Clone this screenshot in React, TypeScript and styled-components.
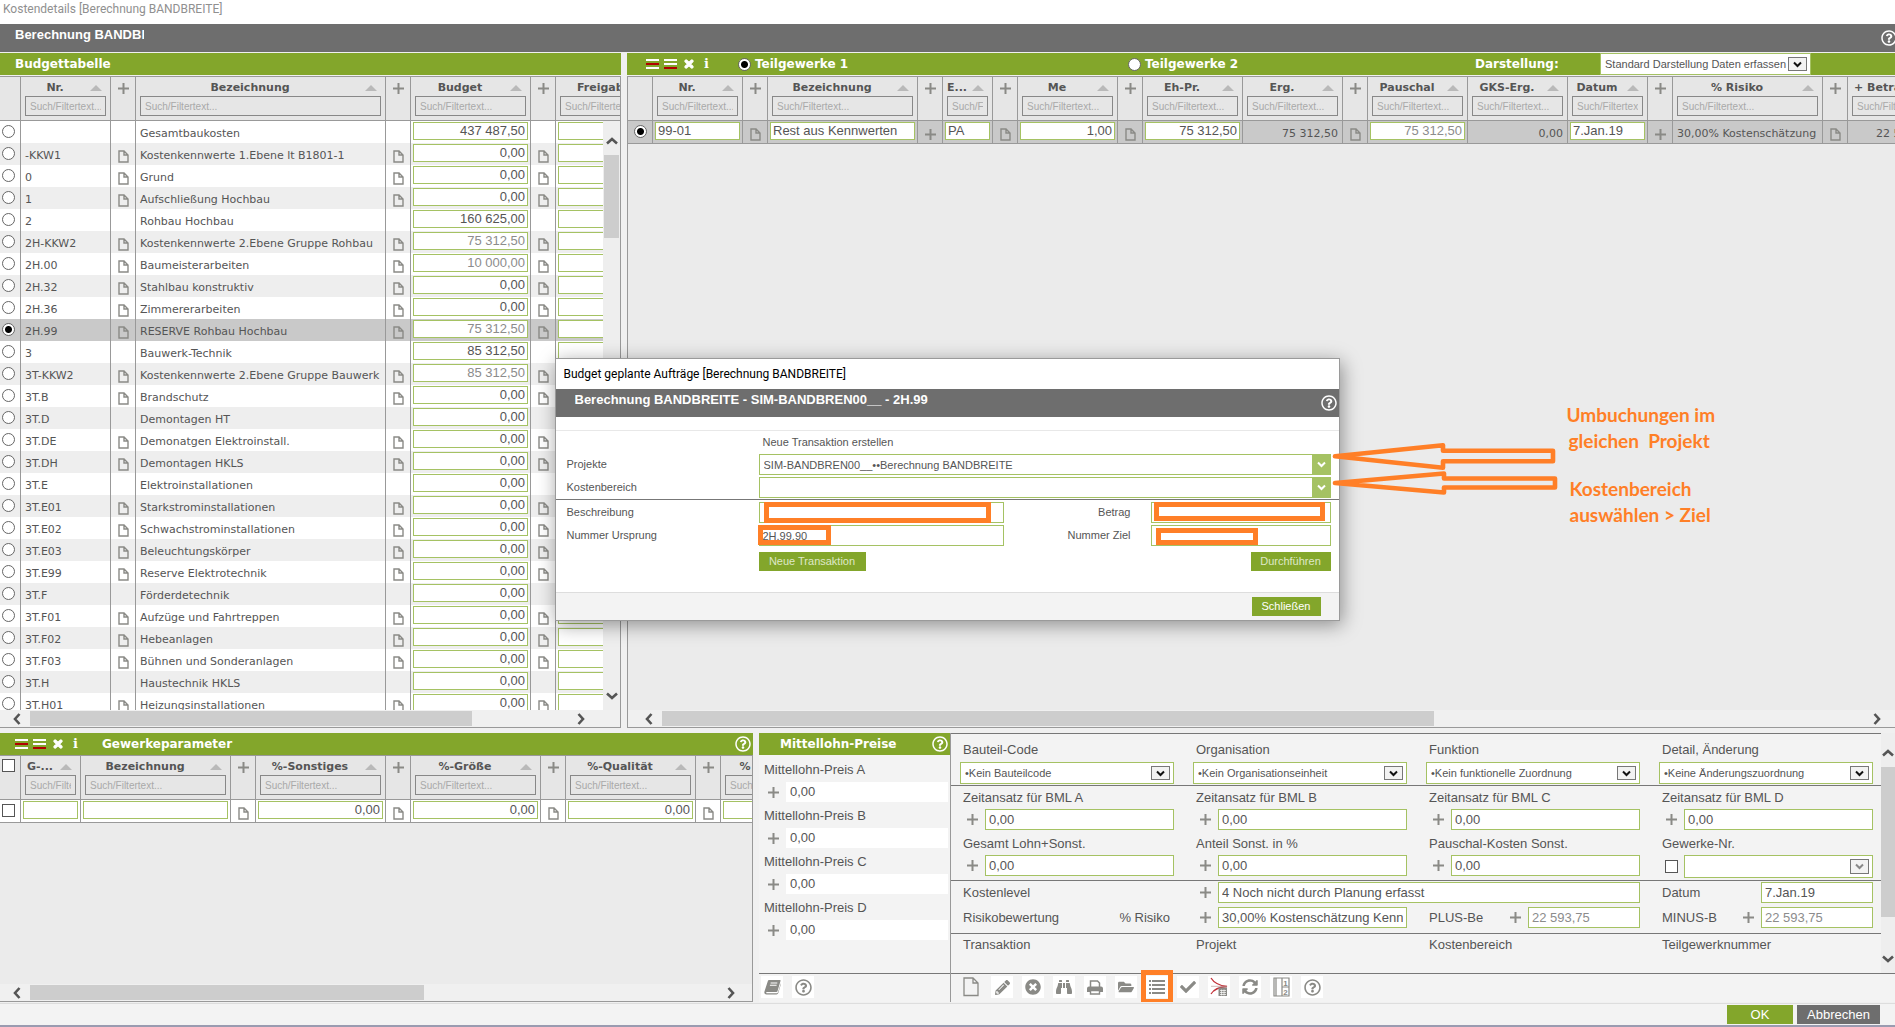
import React from 'react';
import styled, { createGlobalStyle, css } from 'styled-components';
import {
  FaBinoculars,
  FaCheck,
  FaFolderOpen,
  FaPencilAlt,
  FaRegQuestionCircle,
  FaSyncAlt,
  FaTimes,
  FaTimesCircle,
} from 'react-icons/fa';

const c = {
  green: '#83a62b',
  lime: '#a5c263',
  dark: '#6e6e6e',
  line: '#999999',
  rule: '#777777',
  head: '#e6e6e6',
  body: '#ebebeb',
  pane: '#f3f3f3',
  picked: '#c9c9c9',
  text: '#555555',
  muted: '#8c8c8c',
  icon: '#8a8a86',
  mark: '#ff7f27',
};
const sans = '"Liberation Sans", Arial, sans-serif';
const wide = '"DejaVu Sans", Verdana, sans-serif';
const caption = 'Roboto, "Segoe UI", sans-serif';

const Global = createGlobalStyle`
  *, *::before, *::after { box-sizing: border-box; }
  body { margin: 0; background: #f0f0f0; color: ${c.text}; font-family: ${sans}; font-size: 13px; }
  button, input, select { font: inherit; color: inherit; margin: 0; }
  button { border: 0; padding: 0; background: none; cursor: pointer; }
`;

const Page = styled.div`
  position: relative;
  display: flex;
  flex-direction: column;
  height: 100vh;
  min-height: 700px;
  overflow: hidden;
`;
const WindowTitle = styled.div`
  flex: none;
  height: 24px;
  padding: 0 3px;
  background: #fff;
  color: #909090;
  font: 12px/18px ${caption};
`;
const DarkBar = styled.header<{ $inset: number; $end?: number }>`
  flex: none;
  display: flex;
  justify-content: space-between;
  height: 28px;
  padding-left: ${(p) => p.$inset}px;
  padding-right: ${(p) => p.$end ?? 0}px;
  background: ${c.dark};
  color: #fff;
`;
const BarTitle = styled.h1<{ $clip?: boolean }>`
  margin: 0;
  padding-top: 2px;
  font: bold 13px/18px ${sans};
  white-space: nowrap;
  overflow: hidden;
  ${(p) => p.$clip && css`width: 129px;`}
`;
const HelpButton = styled.button<{ $out?: boolean }>`
  display: grid;
  place-items: center;
  flex: none;
  width: 16px;
  margin-right: ${(p) => (p.$out ? -2 : 0)}px;
  color: #fff;
  font-size: 16px;
`;
const TopSplit = styled.main`
  flex: 1;
  min-height: 0;
  display: grid;
  grid-template-columns: minmax(0, 621fr) minmax(0, 1268fr);
  gap: 6px;
  margin: 1px 0 5px;
`;
const Panel = styled.section`
  display: flex;
  flex-direction: column;
  min-width: 0;
  min-height: 0;
  overflow: hidden;
`;
const GreenBar = styled.header<{ $gap?: number; $inset: number }>`
  flex: none;
  display: flex;
  align-items: center;
  height: 22px;
  margin-bottom: ${(p) => p.$gap ?? 0}px;
  padding: 0 2px 0 ${(p) => p.$inset}px;
  background: ${c.green};
  color: #fff;
  font: bold 12px/22px ${wide};
  white-space: nowrap;
`;
const PanelTitle = styled.h2`
  margin: 0;
  font: inherit;
`;
const Grow = styled.span`
  flex: 1;
`;
const BarEnd = styled.span`
  flex: none;
  width: 82px;
`;
const BarLabel = styled.label`
  flex: none;
  width: 125px;
`;
const Tools = styled.div<{ $after: number }>`
  display: flex;
  align-items: center;
  gap: 5px;
  margin-right: ${(p) => p.$after}px;
`;
const ToolButton = styled.button`
  display: grid;
  place-items: center;
  width: 13px;
  height: 16px;
  color: #fff;
  font: bold 13px/16px "DejaVu Serif", serif;
`;
const RadioLabel = styled.label<{ $share: number }>`
  display: flex;
  align-items: center;
  gap: 4px;
  flex: ${(p) => p.$share} 1 0;
`;
const Radio = styled.input.attrs({ type: 'radio' })`
  appearance: none;
  flex: none;
  width: 13px;
  height: 13px;
  border: 1px solid #666;
  border-radius: 50%;
  background: #fff;
  &:checked { background: radial-gradient(circle, #000 0 3px, #fff 4px); }
`;
const Tick = styled.input.attrs({ type: 'checkbox' })`
  appearance: none;
  display: block;
  width: 13px;
  height: 13px;
  border: 1px solid #555;
  background: #fff;
`;

const Frame = styled.div<{ $bleed?: boolean; $open?: boolean }>`
  position: relative;
  flex: 1;
  min-height: 0;
  display: flex;
  flex-direction: column;
  border: 1px solid ${c.line};
  ${(p) => p.$open && css`border-right: 0;`}
  ${(p) => p.$bleed && css`margin-left: -5px;`}
  background: ${c.body};
`;
const Viewport = styled.div`
  position: relative;
  flex: 1;
  min-height: 0;
  overflow: hidden;
`;
const Table = styled.table<{ $width: number }>`
  width: ${(p) => p.$width}px;
  table-layout: fixed;
  border-collapse: separate;
  border-spacing: 0;
  border-bottom: 1px solid ${c.line};
  font: 11px/18px ${wide};
`;
const Th = styled.th`
  height: 44px;
  padding: 3px 4px 0;
  vertical-align: top;
  text-align: center;
  background: ${c.head};
  border-right: 1px solid ${c.line};
  border-bottom: 1px solid ${c.line};
`;
const HeadLine = styled.div`
  display: flex;
  align-items: center;
  height: 16px;
  padding-right: 4px;
  gap: 5px;
  font: bold 11px/16px ${wide};
  white-space: nowrap;
`;
const HeadLabel = styled.span`
  flex: 1;
`;
const SortMark = styled.span`
  border: 6px solid transparent;
  border-top: 0;
  border-bottom: 6px solid #b9b9b9;
`;
const Filter = styled.input`
  display: block;
  width: 100%;
  height: 20px;
  padding: 0 4px;
  border: 1px solid #888;
  background: ${c.head};
  font: 10px/18px ${sans};
  &::placeholder { color: #a9a9a9; opacity: 1; }
`;
const HeadIcon = styled.button`
  display: grid;
  place-items: center;
  width: 100%;
  height: 16px;
`;
const HeadTick = styled.div`
  display: grid;
  justify-content: center;
`;
const Tr = styled.tr<{ $picked: boolean }>`
  background: #fff;
  &:nth-child(even) { background: #eeeeee; }
  ${(p) => p.$picked && css`&&& { background: ${c.picked}; }`}
`;
const Td = styled.td<{ $kind: string; $right?: boolean }>`
  height: 22px;
  padding: ${(p) => (p.$kind === 'text' ? '4px 4px 0' : p.$kind === 'in' ? '1px 2px 0' : '4px 0 0')};
  vertical-align: top;
  text-align: ${(p) => (p.$right ? 'right' : 'left')};
  border-right: 1px solid ${c.line};
  white-space: nowrap;
  overflow: hidden;
`;
const CellInput = styled.input<{ $right?: boolean; $muted?: boolean }>`
  display: block;
  width: 100%;
  height: 18px;
  padding: 0 2px 2px;
  border: 1px solid ${c.lime};
  background: #fff;
  color: ${(p) => (p.$muted ? c.muted : c.text)};
  font: 13px/14px ${sans};
  text-align: ${(p) => (p.$right ? 'right' : 'left')};
`;
const CellIcon = styled.button`
  display: grid;
  place-items: center;
  width: 100%;
  height: 18px;
`;
const CellChoice = styled.div`
  display: grid;
  justify-content: center;
`;

const HBar = styled.div`
  flex: none;
  display: flex;
  align-items: center;
  height: 17px;
  background: #f0f0f0;
`;
const HArrow = styled.button<{ $w: number; $lead?: boolean }>`
  flex: none;
  display: grid;
  align-items: center;
  justify-content: ${(p) => (p.$lead ? 'end' : 'center')};
  width: ${(p) => p.$w}px;
  height: 17px;
  padding-right: ${(p) => (p.$lead ? 7 : 0)}px;
`;
const HTrack = styled.div`
  flex: 1;
`;
const HThumb = styled.div`
  height: 15px;
  background: #cdcdcd;
`;
const VBar = styled.div<{ $over?: boolean }>`
  display: flex;
  flex-direction: column;
  background: #eeeeee;
  ${(p) =>
    p.$over
      ? css`position: absolute; top: 44px; right: 0; bottom: 0; width: 17px; padding: 0 1px;`
      : css`flex: none; width: 14px;`}
`;
const VArrow = styled.button<{ $h: number }>`
  flex: none;
  display: grid;
  align-items: end;
  justify-content: center;
  width: 100%;
  height: ${(p) => p.$h}px;
  padding-bottom: 8px;
`;
const VTrack = styled.div`
  flex: 1;
`;
const VThumb = styled.div`
  background: #cdcdcd;
`;

const SelectWrap = styled.span<{ $h: number; $w?: number }>`
  position: relative;
  display: block;
  flex: ${(p) => (p.$w ? 'none' : '1')};
  width: ${(p) => (p.$w ? `${p.$w}px` : 'auto')};
  height: ${(p) => p.$h}px;
`;
const Select = styled.select`
  appearance: none;
  display: block;
  width: 100%;
  height: 100%;
  padding: 0 22px 0 4px;
  border: 1px solid ${c.lime};
  border-radius: 0;
  background: #fff;
  color: ${c.text};
  font: 11px/18px ${sans};
  opacity: 1;
`;
const SelectArrow = styled.span<{ $off?: boolean }>`
  position: absolute;
  top: 4px;
  right: 4px;
  bottom: 4px;
  display: grid;
  place-items: center;
  width: 19px;
  border: 1px solid #777;
  background: #f2f2f2;
  color: ${(p) => (p.$off ? '#888' : '#111')};
  pointer-events: none;
`;
const LimeArrow = styled.span`
  position: absolute;
  top: 0;
  right: 0;
  bottom: 0;
  display: grid;
  place-items: center;
  width: 19px;
  background: ${c.lime};
  color: #fff;
  pointer-events: none;
`;

const BottomSplit = styled.div`
  flex: none;
  display: grid;
  grid-template-columns: minmax(0, 759fr) minmax(0, 191fr) minmax(0, 945fr);
  margin-bottom: 1px;
`;
const ParamPanel = styled(Panel)`
  margin-right: 6px;
`;
const PricePanel = styled(Panel)`
  background: ${c.pane};
`;
const PriceList = styled.div`
  flex: 1;
  padding: 7px 2px 0 5px;
`;
const PriceItem = styled.div`
  margin-bottom: 6px;
`;
const Label = styled.label<{ $gap?: number }>`
  display: block;
  margin-bottom: ${(p) => p.$gap ?? 0}px;
  font: 13px/16px ${sans};
  white-space: nowrap;
`;
const PlusRow = styled.div<{ $gap?: number }>`
  display: flex;
  align-items: center;
  gap: ${(p) => p.$gap ?? 0}px;
`;
const PlusButton = styled.button<{ $w?: number }>`
  flex: none;
  display: grid;
  place-items: center;
  width: ${(p) => p.$w ?? 25}px;
  height: 18px;
`;
const PriceInput = styled.input`
  flex: 1;
  min-width: 0;
  height: 20px;
  padding: 0 4px;
  border: 0;
  background: #fff;
  font: 13px/20px ${sans};
`;
const FormPanel = styled(Panel)`
  background: ${c.pane};
  border-left: 1px solid ${c.line};
`;
const FormBody = styled.div`
  flex: 1;
  display: flex;
`;
const FormMain = styled.div`
  flex: 1;
  min-width: 0;
`;
const Section = styled.div<{ $top: number; $bottom: number; $rows: number }>`
  display: grid;
  grid-template-columns: repeat(4, minmax(0, 1fr));
  column-gap: 19px;
  row-gap: ${(p) => p.$rows}px;
  padding: ${(p) => p.$top}px 8px ${(p) => p.$bottom}px 9px;
  border-top: 1px solid ${c.rule};
`;
const Field = styled.div`
  min-width: 0;
`;
const LineField = styled.div<{ $span?: number }>`
  grid-column: span ${(p) => p.$span ?? 1};
  display: flex;
  align-items: center;
  justify-content: space-between;
  min-width: 0;
  padding-left: ${(p) => (p.$span ? 0 : 3)}px;
`;
const FieldLabel = styled(Label)`
  padding-left: 3px;
`;
const LineText = styled.span`
  padding-right: 4px;
`;
const FieldInput = styled.input<{ $w?: number; $muted?: boolean }>`
  flex: ${(p) => (p.$w ? 'none' : 1)};
  width: ${(p) => (p.$w ? `${p.$w}px` : 'auto')};
  min-width: 0;
  height: 21px;
  padding: 0 3px;
  border: 1px solid ${c.lime};
  background: #fff;
  color: ${(p) => (p.$muted ? c.muted : c.text)};
  font: 13px/19px ${sans};
`;
const TickSlot = styled.span`
  flex: none;
  display: grid;
  justify-content: center;
  width: 25px;
`;
const Toolbar = styled.div<{ $inset: number }>`
  flex: none;
  display: flex;
  gap: 9px;
  padding: 2px 0 4px ${(p) => p.$inset}px;
  border-top: 1px solid ${c.rule};
`;
const Tile = styled.button<{ $bare?: boolean }>`
  position: relative;
  display: grid;
  place-items: center;
  width: 22px;
  height: 22px;
  background: ${(p) => (p.$bare ? 'transparent' : '#fff')};
  color: ${c.icon};
  font-size: 15px;
`;
const Footer = styled.footer`
  flex: none;
  display: flex;
  justify-content: flex-end;
  gap: 4px;
  padding: 1px 15px 1px 0;
  border-top: 1px solid #dddddd;
  border-bottom: 2px solid #9a9bb0;
  background: ${c.pane};
`;
const Action = styled.button<{ $w: number; $tone?: string; $small?: boolean; $dim?: boolean }>`
  width: ${(p) => p.$w}px;
  height: 19px;
  background: ${(p) => p.$tone ?? c.green};
  color: ${(p) => (p.$dim ? '#dfe8c8' : '#fff')};
  font: ${(p) => (p.$small ? 11 : 13)}px/19px ${sans};
`;

const Overlay = styled.div`
  position: absolute;
  top: 358px;
  left: calc(50% - 393px);
  width: 785px;
`;
const Dialog = styled.div`
  border: 1px solid #9a9a9a;
  background: #fff;
  box-shadow: 2px 4px 18px rgba(0, 0, 0, 0.4);
  font: 11px/20px ${sans};
`;
const DialogTitle = styled.div`
  height: 30px;
  padding-left: 8px;
  color: #000;
  font: 12px/30px ${caption};
`;
const DialogStrip = styled.div`
  height: 14px;
  border-bottom: 1px solid #e8e8e8;
`;
const DialogForm = styled.form`
  height: 161px;
`;
const DialogRows = styled.div<{ $ruled?: boolean }>`
  display: grid;
  grid-template-columns: 192px minmax(0, 1fr);
  row-gap: 2px;
  padding: 1px 8px 1px 11px;
  ${(p) => p.$ruled && css`
    grid-template-columns: 192px 245px minmax(0, 1fr) 180px;
    padding-top: 2px;
    border-top: 1px solid ${c.rule};
  `}
`;
const DialogNote = styled.div`
  grid-column: 2;
  padding: 0 4px;
  line-height: 20px;
`;
const DialogLabel = styled.label<{ $right?: boolean }>`
  padding-right: ${(p) => (p.$right ? 20 : 0)}px;
  text-align: ${(p) => (p.$right ? 'right' : 'left')};
  line-height: 21px;
`;
const DialogInput = styled.input`
  display: block;
  width: 100%;
  height: 21px;
  padding: 0 3px;
  border: 1px solid ${c.lime};
  background: #fff;
  font: 11px/19px ${sans};
`;
const DialogActions = styled.div`
  display: flex;
  justify-content: space-between;
  padding: 5px 8px 0 203px;
`;
const DialogFooter = styled.div`
  display: flex;
  justify-content: flex-end;
  height: 28px;
  padding: 4px 18px 0;
  border-top: 1px solid #dddddd;
  background: #f3f3f3;
`;
const Highlight = styled.span<{ $x: number; $y: number; $w: number; $h: number }>`
  position: absolute;
  left: ${(p) => p.$x}px;
  top: ${(p) => p.$y}px;
  width: ${(p) => p.$w}px;
  height: ${(p) => p.$h}px;
  border: 5px solid ${c.mark};
  pointer-events: none;
`;
const Arrows = styled.svg`
  position: absolute;
  left: 774px;
  top: 80px;
  pointer-events: none;
`;
const Note = styled.p<{ $y: number; $x: number }>`
  position: absolute;
  left: ${(p) => p.$x}px;
  top: ${(p) => p.$y}px;
  margin: 0;
  color: ${c.mark};
  font: bold 19px/26px Lato, Calibri, sans-serif;
  white-space: pre;
`;

const Plus = () => (
  <svg width="11" height="11" viewBox="0 0 11 11" aria-hidden="true">
    <path d="M5.5 0v11M0 5.5h11" stroke={c.icon} strokeWidth="2" />
  </svg>
);
const Sheet = () => (
  <svg width="11" height="13" viewBox="0 0 11 13" aria-hidden="true">
    <path d="M1 1h5l4 4v7H1zM6 1v4h4" fill="none" stroke={c.icon} strokeWidth="1.4" />
  </svg>
);
const turn = { left: 0, up: 90, right: 180, down: 270 };
const Chevron = ({ dir }: { dir: keyof typeof turn }) => (
  <svg width="12" height="12" viewBox="0 0 12 12" aria-hidden="true">
    <path d="M8.5 1 4 6l4.500 5" transform={`rotate(${turn[dir]} 6 6)`} fill="none" stroke="#555" strokeWidth="2.600" />
  </svg>
);
const SmallV = () => (
  <svg width="9" height="7" viewBox="0 0 9 7" aria-hidden="true">
    <path d="M1 1.500 4.500 5 8 1.500" fill="none" stroke="currentColor" strokeWidth="2" />
  </svg>
);
const Lines = ({ red }: { red: number }) => (
  <svg width="13" height="10" viewBox="0 0 13 10" aria-hidden="true">
    {[0, 1, 2].map((i) => (
      <rect key={i} y={i * 4} width="13" height="2" fill={i === red ? '#b00000' : '#fff'} />
    ))}
  </svg>
);
const BigSheet = () => (
  <svg width="16" height="20" viewBox="0 0 16 20" aria-hidden="true">
    <path d="M1 1h9l5 5v12.500H1zM10 1v5h5" fill="none" stroke={c.icon} strokeWidth="1.300" />
  </svg>
);
const ListLines = () => (
  <svg width="16" height="14" viewBox="0 0 16 14" aria-hidden="true">
    {[0, 4, 8, 12].map((y) => (
      <path key={y} d={`M0 ${y}h2v2H0zM3 ${y}h13v2H3z`} fill={c.icon} />
    ))}
  </svg>
);
const Book = () => (
  <svg width="17" height="16" viewBox="0 0 17 16" aria-hidden="true">
    <path d="M5.500 1h10.300c.6 0 .9.500.7 1.100L13.500 12.200c-.2.500-.6.800-1.100.800H3c-.9 0-1.300.900-.4 1.300h9.900c.8 0 1.200-.3 1.500-1.100L16.900 4l-.1 1.500-2.500 8.600c-.3.900-.9 1.400-1.800 1.400H2.600C1 15.500 0 14 .4 12.700L3.700 2.400C4 1.500 4.600 1 5.500 1z" fill={c.icon} />
    <path d="M6.600 4h6.700M5.900 6.300h6.700" stroke="#fff" strokeWidth="1.100" />
  </svg>
);
const Printer = () => (
  <svg width="16" height="15" viewBox="0 0 16 15" aria-hidden="true">
    <path d="M3.500 7.500V1h7l2 2v4.500" fill="none" stroke={c.icon} strokeWidth="1.500" />
    <path d="M2 6.500h12a2 2 0 0 1 2 2V12h-3V10H3v2H0V8.500a2 2 0 0 1 2-2z" fill={c.icon} />
    <path d="M3.500 10.500h9V14h-9z" fill="#fff" stroke={c.icon} strokeWidth="1.400" />
  </svg>
);
const CurveCalc = () => (
  <svg width="20" height="20" viewBox="0 0 20 20" aria-hidden="true">
    <path d="M2 1c3 5 8 7.500 16 8.500C10 10 5 12 2 17" fill="none" stroke="#c23038" strokeWidth="1.300" />
    <path d="M2 9.300h16" stroke="#b99" strokeWidth="0.700" />
    <path d="M9.500 10.500h8.500v8.500H9.500z" fill={c.icon} />
    <path d="M11 13.500h6M11 15.500h6M11 17.500h6M12.600 12.500v6M15 12.500v6" stroke="#fff" strokeWidth="0.700" />
  </svg>
);
const Panes = () => (
  <svg width="17" height="20" viewBox="0 0 17 20" aria-hidden="true">
    <path d="M1 1h15v18H1zM9 1v18M9 10h7M3 1v18" fill="none" stroke={c.icon} strokeWidth="1.200" />
    <text x="12.500" y="8.500" textAnchor="middle" fontSize="8" fontWeight="bold" fontFamily="Liberation Sans" fill={c.icon}>1</text>
    <text x="12.500" y="17.500" textAnchor="middle" fontSize="8" fontWeight="bold" fontFamily="Liberation Sans" fill={c.icon}>2</text>
  </svg>
);

type Col = { kind: 'pick' | 'icon' | 'data'; w: number; label?: string };
type Cell = { kind: 'text' | 'in' | 'file' | 'plus' | 'none' | 'radio' | 'tick'; v?: string; right?: boolean; muted?: boolean };

const pick: Col = { kind: 'pick', w: 25 };
const icon: Col = { kind: 'icon', w: 25 };
const data = (label: string, w: number): Col => ({ kind: 'data', w, label });
const text = (v: string, right = false): Cell => ({ kind: 'text', v, right });
const field = (v: string, right = false, muted = false): Cell => ({ kind: 'in', v, right, muted });
const file: Cell = { kind: 'file' };
const plus: Cell = { kind: 'plus' };
const none: Cell = { kind: 'none' };

function CellBody({ cell, name, picked, label }: { cell: Cell; name: string; picked: boolean; label: string }) {
  switch (cell.kind) {
    case 'text':
      return <>{cell.v}</>;
    case 'in':
      return <CellInput aria-label={label} defaultValue={cell.v} $right={cell.right} $muted={cell.muted} />;
    case 'file':
      return <CellIcon type="button" aria-label="Notiz"><Sheet /></CellIcon>;
    case 'plus':
      return <CellIcon type="button" aria-label="Auswählen"><Plus /></CellIcon>;
    case 'radio':
      return <CellChoice><Radio name={name} defaultChecked={picked} aria-label="Zeile wählen" /></CellChoice>;
    case 'tick':
      return <CellChoice><Tick aria-label="Zeile markieren" /></CellChoice>;
    default:
      return null;
  }
}

function DataTable({ name, cols, rows, picked, ticks }: { name: string; cols: Col[]; rows: Cell[][]; picked?: number; ticks?: boolean }) {
  return (
    <Table $width={cols.reduce((sum, col) => sum + col.w, 0)}>
      <colgroup>
        {cols.map((col, i) => <col key={i} style={{ width: col.w }} />)}
      </colgroup>
      <thead>
        <tr>
          {cols.map((col, i) => (
            <Th key={i}>
              {col.kind === 'data' && (
                <>
                  <HeadLine><HeadLabel>{col.label}</HeadLabel><SortMark /></HeadLine>
                  <Filter placeholder="Such/Filtertext..." aria-label={`Filter ${col.label}`} />
                </>
              )}
              {col.kind === 'icon' && <HeadIcon type="button" aria-label="Spalte"><Plus /></HeadIcon>}
              {col.kind === 'pick' && ticks && <HeadTick><Tick aria-label="Alle markieren" /></HeadTick>}
            </Th>
          ))}
        </tr>
      </thead>
      <tbody>
        {rows.map((row, r) => (
          <Tr key={r} $picked={r === picked}>
            {row.map((cell, i) => (
              <Td key={i} $kind={cell.kind} $right={cell.right}>
                <CellBody cell={cell} name={name} picked={r === picked} label={cols[i].label ?? ''} />
              </Td>
            ))}
          </Tr>
        ))}
      </tbody>
    </Table>
  );
}

function HScroll({ thumb, end, endWidth }: { thumb: number; end: number; endWidth: number }) {
  return (
    <HBar>
      <HArrow type="button" aria-label="Nach links" $w={34} $lead><Chevron dir="left" /></HArrow>
      <HThumb style={{ flex: thumb }} />
      <HTrack style={{ flex: end }} />
      <HArrow type="button" aria-label="Nach rechts" $w={endWidth}><Chevron dir="right" /></HArrow>
    </HBar>
  );
}

function GridTools({ after }: { after: number }) {
  return (
    <Tools $after={after}>
      <ToolButton type="button" aria-label="Zeile einfügen"><Lines red={1} /></ToolButton>
      <ToolButton type="button" aria-label="Zeile anhängen"><Lines red={2} /></ToolButton>
      <ToolButton type="button" aria-label="Löschen"><FaTimes size={12} strokeWidth="50" stroke="#fff" /></ToolButton>
      <ToolButton type="button" aria-label="Info">i</ToolButton>
    </Tools>
  );
}

function DropDown({ value, h, off, id, w }: { value: string; h: number; off?: boolean; id: string; w?: number }) {
  return (
    <SelectWrap $h={h} $w={w}>
      <Select id={id} disabled={off}><option>{value}</option></Select>
      <SelectArrow $off={off}><SmallV /></SelectArrow>
    </SelectWrap>
  );
}

const budgetCols = [pick, data('Nr.', 90), icon, data('Bezeichnung', 250), icon, data('Budget', 120), icon, data('Freigabe', 118)];
// Nummer, Bezeichnung, Budget, Kennzeichen: g = Gruppe ohne Notiz, m = berechneter Wert
const budget: [string, string, string, string][] = [
  ['', 'Gesamtbaukosten', '437 487,50', 'g'],
  ['-KKW1', 'Kostenkennwerte 1.Ebene lt B1801-1', '0,00', ''],
  ['0', 'Grund', '0,00', ''],
  ['1', 'Aufschließung Hochbau', '0,00', ''],
  ['2', 'Rohbau Hochbau', '160 625,00', 'g'],
  ['2H-KKW2', 'Kostenkennwerte 2.Ebene Gruppe Rohbau', '75 312,50', 'm'],
  ['2H.00', 'Baumeisterarbeiten', '10 000,00', 'm'],
  ['2H.32', 'Stahlbau konstruktiv', '0,00', ''],
  ['2H.36', 'Zimmererarbeiten', '0,00', ''],
  ['2H.99', 'RESERVE Rohbau Hochbau', '75 312,50', 'm'],
  ['3', 'Bauwerk-Technik', '85 312,50', 'g'],
  ['3T-KKW2', 'Kostenkennwerte 2.Ebene Gruppe Bauwerk', '85 312,50', 'm'],
  ['3T.B', 'Brandschutz', '0,00', ''],
  ['3T.D', 'Demontagen HT', '0,00', 'g'],
  ['3T.DE', 'Demonatgen Elektroinstall.', '0,00', ''],
  ['3T.DH', 'Demontagen HKLS', '0,00', ''],
  ['3T.E', 'Elektroinstallationen', '0,00', 'g'],
  ['3T.E01', 'Starkstrominstallationen', '0,00', ''],
  ['3T.E02', 'Schwachstrominstallationen', '0,00', ''],
  ['3T.E03', 'Beleuchtungskörper', '0,00', ''],
  ['3T.E99', 'Reserve Elektrotechnik', '0,00', ''],
  ['3T.F', 'Förderdetechnik', '0,00', 'g'],
  ['3T.F01', 'Aufzüge und Fahrtreppen', '0,00', ''],
  ['3T.F02', 'Hebeanlagen', '0,00', ''],
  ['3T.F03', 'Bühnen und Sonderanlagen', '0,00', ''],
  ['3T.H', 'Haustechnik HKLS', '0,00', 'g'],
  ['3T.H01', 'Heizungsinstallationen', '0,00', ''],
];
const budgetRows: Cell[][] = budget.map(([nr, title, sum, flag]) => {
  const mark = flag === 'g' ? none : file;
  return [{ kind: 'radio' }, text(nr), mark, text(title), mark, field(sum, true, flag === 'm'), mark, field('')];
});

const partCols = [
  pick, data('Nr.', 90), icon, data('Bezeichnung', 150), icon, data('E...', 50), icon, data('Me', 100), icon,
  data('Eh-Pr.', 100), data('Erg.', 100), icon, data('Pauschal', 100), data('GKS-Erg.', 100), data('Datum', 80),
  icon, data('% Risiko', 150), icon, data('+ Betrag', 89),
];
const partRows: Cell[][] = [[
  { kind: 'radio' }, field('99-01'), file, field('Rest aus Kennwerten'), plus, field('PA'), file, field('1,00', true), file,
  field('75 312,50', true), text('75 312,50', true), file, field('75 312,50', true, true), text('0,00', true), field('7.Jan.19'),
  plus, text('30,00% Kostenschätzung'), file, text('22 593,75', true),
]];

const paramCols = [
  pick, data('G-...', 60), data('Bezeichnung', 150), icon, data('%-Sonstiges', 130), icon, data('%-Größe', 130), icon,
  data('%-Qualität', 130), icon, data('%', 70),
];
const paramRows: Cell[][] = [[
  { kind: 'tick' }, field(''), field(''), file, field('0,00', true), file, field('0,00', true), file, field('0,00', true), file, field(''),
]];

function PlusField({ label, id }: { label: string; id: string }) {
  return (
    <Field>
      <FieldLabel htmlFor={id} $gap={3}>{label}</FieldLabel>
      <PlusRow>
        <PlusButton type="button" aria-label={`${label} wählen`}><Plus /></PlusButton>
        <FieldInput id={id} defaultValue="0,00" />
      </PlusRow>
    </Field>
  );
}

function CostForm() {
  return (
    <FormPanel>
      <FormBody>
        <FormMain>
          <Section $top={8} $bottom={1} $rows={0}>
            {[
              ['Bauteil-Code', '•Kein Bauteilcode'],
              ['Organisation', '•Kein Organisationseinheit'],
              ['Funktion', '•Kein funktionelle Zuordnung'],
              ['Detail, Änderung', '•Keine Änderungszuordnung'],
            ].map(([label, value], i) => (
              <Field key={label}>
                <FieldLabel htmlFor={`ord${i}`} $gap={4}>{label}</FieldLabel>
                <DropDown id={`ord${i}`} value={value} h={22} />
              </Field>
            ))}
          </Section>
          <Section $top={4} $bottom={2} $rows={6}>
            {['A', 'B', 'C', 'D'].map((l) => <PlusField key={l} id={`bml${l}`} label={`Zeitansatz für BML ${l}`} />)}
            <PlusField id="lohn" label="Gesamt Lohn+Sonst." />
            <PlusField id="anteil" label="Anteil Sonst. in %" />
            <PlusField id="pausch" label="Pauschal-Kosten Sonst." />
            <Field>
              <FieldLabel htmlFor="gewerk" $gap={3}>Gewerke-Nr.</FieldLabel>
              <PlusRow>
                <TickSlot><Tick aria-label="Gewerke-Nr. verwenden" /></TickSlot>
                <DropDown id="gewerk" value="" h={23} off />
              </PlusRow>
            </Field>
          </Section>
          <Section $top={1} $bottom={5} $rows={4}>
            <LineField><Label htmlFor="level">Kostenlevel</Label></LineField>
            <LineField $span={2}>
              <PlusButton type="button" aria-label="Kostenlevel wählen"><Plus /></PlusButton>
              <FieldInput id="level" defaultValue="4 Noch nicht durch Planung erfasst" />
            </LineField>
            <LineField><Label htmlFor="datum">Datum</Label><FieldInput id="datum" $w={112} defaultValue="7.Jan.19" /></LineField>
            <LineField><Label htmlFor="risiko">Risikobewertung</Label><LineText>% Risiko</LineText></LineField>
            <LineField $span={1}>
              <PlusButton type="button" aria-label="Risiko wählen"><Plus /></PlusButton>
              <FieldInput id="risiko" defaultValue="30,00% Kostenschätzung Kenn" />
            </LineField>
            <LineField>
              <Label htmlFor="plus">PLUS-Be</Label><Grow />
              <PlusButton type="button" aria-label="PLUS-Be wählen"><Plus /></PlusButton>
              <FieldInput id="plus" $w={112} $muted defaultValue="22 593,75" />
            </LineField>
            <LineField>
              <Label htmlFor="minus">MINUS-B</Label><Grow />
              <PlusButton type="button" aria-label="MINUS-B wählen"><Plus /></PlusButton>
              <FieldInput id="minus" $w={112} $muted defaultValue="22 593,75" />
            </LineField>
          </Section>
          <Section $top={3} $bottom={20} $rows={0}>
            {['Transaktion', 'Projekt', 'Kostenbereich', 'Teilgewerknummer'].map((l) => <FieldLabel as="span" key={l}>{l}</FieldLabel>)}
          </Section>
        </FormMain>
        <VBar>
          <VArrow type="button" aria-label="Nach oben" $h={34}><Chevron dir="up" /></VArrow>
          <VThumb style={{ flex: 156 }} />
          <VTrack style={{ flex: 14 }} />
          <VArrow type="button" aria-label="Nach unten" $h={43}><Chevron dir="down" /></VArrow>
        </VBar>
      </FormBody>
      <Toolbar $inset={9}>
        <Tile type="button" aria-label="Neu" $bare><BigSheet /></Tile>
        <Tile type="button" aria-label="Bearbeiten"><FaPencilAlt /></Tile>
        <Tile type="button" aria-label="Löschen"><FaTimesCircle size={16} /></Tile>
        <Tile type="button" aria-label="Suchen"><FaBinoculars size={16} /></Tile>
        <Tile type="button" aria-label="Drucken"><Printer /></Tile>
        <Tile type="button" aria-label="Öffnen"><FaFolderOpen size={16} /></Tile>
        <Tile type="button" aria-label="Transaktionen">
          <ListLines />
          <Highlight $x={-5} $y={-6} $w={32} $h={34} />
        </Tile>
        <Tile type="button" aria-label="Übernehmen"><FaCheck size={16} /></Tile>
        <Tile type="button" aria-label="Berechnen"><CurveCalc /></Tile>
        <Tile type="button" aria-label="Aktualisieren"><FaSyncAlt size={16} /></Tile>
        <Tile type="button" aria-label="Ansicht"><Panes /></Tile>
        <Tile type="button" aria-label="Hilfe"><FaRegQuestionCircle size={17} /></Tile>
      </Toolbar>
    </FormPanel>
  );
}

function TransferDialog() {
  return (
    <Overlay>
      <Dialog role="dialog" aria-label="Budget geplante Aufträge">
        <DialogTitle>Budget geplante Aufträge [Berechnung BANDBREITE]</DialogTitle>
        <DarkBar $inset={19} $end={2}>
          <BarTitle as="h2">Berechnung BANDBREITE - SIM-BANDBREN00__ - 2H.99</BarTitle>
          <HelpButton type="button" aria-label="Hilfe"><FaRegQuestionCircle /></HelpButton>
        </DarkBar>
        <DialogStrip />
        <DialogForm>
          <DialogRows>
            <DialogNote>Neue Transaktion erstellen</DialogNote>
            <DialogLabel htmlFor="projekte">Projekte</DialogLabel>
            <SelectWrap $h={21}>
              <Select id="projekte"><option>SIM-BANDBREN00__••Berechnung BANDBREITE</option></Select>
              <LimeArrow><SmallV /></LimeArrow>
            </SelectWrap>
            <DialogLabel htmlFor="bereich">Kostenbereich</DialogLabel>
            <SelectWrap $h={21}>
              <Select id="bereich"><option></option></Select>
              <LimeArrow><SmallV /></LimeArrow>
            </SelectWrap>
          </DialogRows>
          <DialogRows $ruled>
            <DialogLabel htmlFor="beschr">Beschreibung</DialogLabel>
            <DialogInput id="beschr" />
            <DialogLabel htmlFor="betrag" $right>Betrag</DialogLabel>
            <DialogInput id="betrag" />
            <DialogLabel htmlFor="ursprung">Nummer Ursprung</DialogLabel>
            <DialogInput id="ursprung" defaultValue="2H.99.90" />
            <DialogLabel htmlFor="ziel" $right>Nummer Ziel</DialogLabel>
            <DialogInput id="ziel" />
          </DialogRows>
          <DialogActions>
            <Action type="button" $w={107} $small $dim>Neue Transaktion</Action>
            <Action type="button" $w={80} $small $dim>Durchführen</Action>
          </DialogActions>
        </DialogForm>
        <DialogFooter><Action type="button" $w={69} $small>Schließen</Action></DialogFooter>
      </Dialog>
      <Highlight $x={209} $y={144} $w={227} $h={21} />
      <Highlight $x={203} $y={167} $w={73} $h={20} />
      <Highlight $x={599} $y={144} $w={171} $h={19} />
      <Highlight $x={601} $y={170} $w={102} $h={17} />
      <Arrows width="232" height="58" viewBox="0 0 232 58" aria-hidden="true">
        <g fill="none" stroke={c.mark} strokeWidth="4.600" strokeLinejoin="round">
          <path d="M6 18.300 114 7.300v5.500h110v10.500H114v6.500z" />
          <path d="M6 45 115 35.500v5h111v9H115v5z" />
        </g>
      </Arrows>
      <Note $x={1012} $y={44}>Umbuchungen im</Note>
      <Note $x={1014} $y={70}>gleichen  Projekt</Note>
      <Note $x={1015} $y={118}>Kostenbereich</Note>
      <Note $x={1015} $y={144}>auswählen &gt; Ziel</Note>
    </Overlay>
  );
}

export default function App() {
  return (
    <>
      <Global />
      <Page>
        <WindowTitle>Kostendetails [Berechnung BANDBREITE]</WindowTitle>
        <DarkBar $inset={15}>
          <BarTitle $clip>Berechnung BANDBREITE</BarTitle>
          <HelpButton type="button" aria-label="Hilfe" $out><FaRegQuestionCircle /></HelpButton>
        </DarkBar>
        <TopSplit>
          <Panel>
            <GreenBar $inset={15} $gap={1}><PanelTitle>Budgettabelle</PanelTitle></GreenBar>
            <Frame $bleed>
              <Viewport>
                <DataTable name="budget" cols={budgetCols} rows={budgetRows} picked={9} />
                <VBar $over>
                  <VArrow type="button" aria-label="Nach oben" $h={34}><Chevron dir="up" /></VArrow>
                  <VThumb style={{ flex: 83 }} />
                  <VTrack style={{ flex: 444 }} />
                  <VArrow type="button" aria-label="Nach unten" $h={28}><Chevron dir="down" /></VArrow>
                </VBar>
              </Viewport>
              <HScroll thumb={442} end={69} endWidth={79} />
            </Frame>
          </Panel>
          <Panel>
            <GreenBar $inset={19} $gap={1}>
              <GridTools after={25} />
              <RadioLabel $share={390}><Radio name="teil" defaultChecked />Teilgewerke 1</RadioLabel>
              <RadioLabel $share={347}><Radio name="teil" />Teilgewerke 2</RadioLabel>
              <BarLabel htmlFor="darst">Darstellung:</BarLabel>
              <DropDown id="darst" value="Standard Darstellung Daten erfassen" h={22} w={211} />
              <BarEnd />
            </GreenBar>
            <Frame $open>
              <Viewport><DataTable name="teilgewerk" cols={partCols} rows={partRows} picked={0} /></Viewport>
              <HScroll thumb={772} end={424} endWidth={37} />
            </Frame>
          </Panel>
        </TopSplit>
        <BottomSplit>
          <ParamPanel>
            <GreenBar $inset={15}>
              <GridTools after={20} />
              <PanelTitle>Gewerkeparameter</PanelTitle>
              <Grow />
              <HelpButton type="button" aria-label="Hilfe"><FaRegQuestionCircle /></HelpButton>
            </GreenBar>
            <Frame $bleed>
              <Viewport><DataTable name="parameter" cols={paramCols} rows={paramRows} ticks /></Viewport>
              <HScroll thumb={393} end={285} endWidth={43} />
            </Frame>
          </ParamPanel>
          <PricePanel>
            <GreenBar $inset={21}>
              <PanelTitle>Mittellohn-Preise</PanelTitle>
              <Grow />
              <HelpButton type="button" aria-label="Hilfe"><FaRegQuestionCircle /></HelpButton>
            </GreenBar>
            <PriceList>
              {['A', 'B', 'C', 'D'].map((l) => (
                <PriceItem key={l}>
                  <Label htmlFor={`preis${l}`} $gap={4}>Mittellohn-Preis {l}</Label>
                  <PlusRow $gap={4}>
                    <PlusButton type="button" $w={18} aria-label={`Preis ${l} wählen`}><Plus /></PlusButton>
                    <PriceInput id={`preis${l}`} defaultValue="0,00" />
                  </PlusRow>
                </PriceItem>
              ))}
            </PriceList>
            <Toolbar $inset={2}>
              <Tile type="button" aria-label="Buch"><Book /></Tile>
              <Tile type="button" aria-label="Hilfe"><FaRegQuestionCircle size={17} /></Tile>
            </Toolbar>
          </PricePanel>
          <CostForm />
        </BottomSplit>
        <Footer>
          <Action type="button" $w={66}>OK</Action>
          <Action type="button" $w={83} $tone={c.dark}>Abbrechen</Action>
        </Footer>
        <TransferDialog />
      </Page>
    </>
  );
}
